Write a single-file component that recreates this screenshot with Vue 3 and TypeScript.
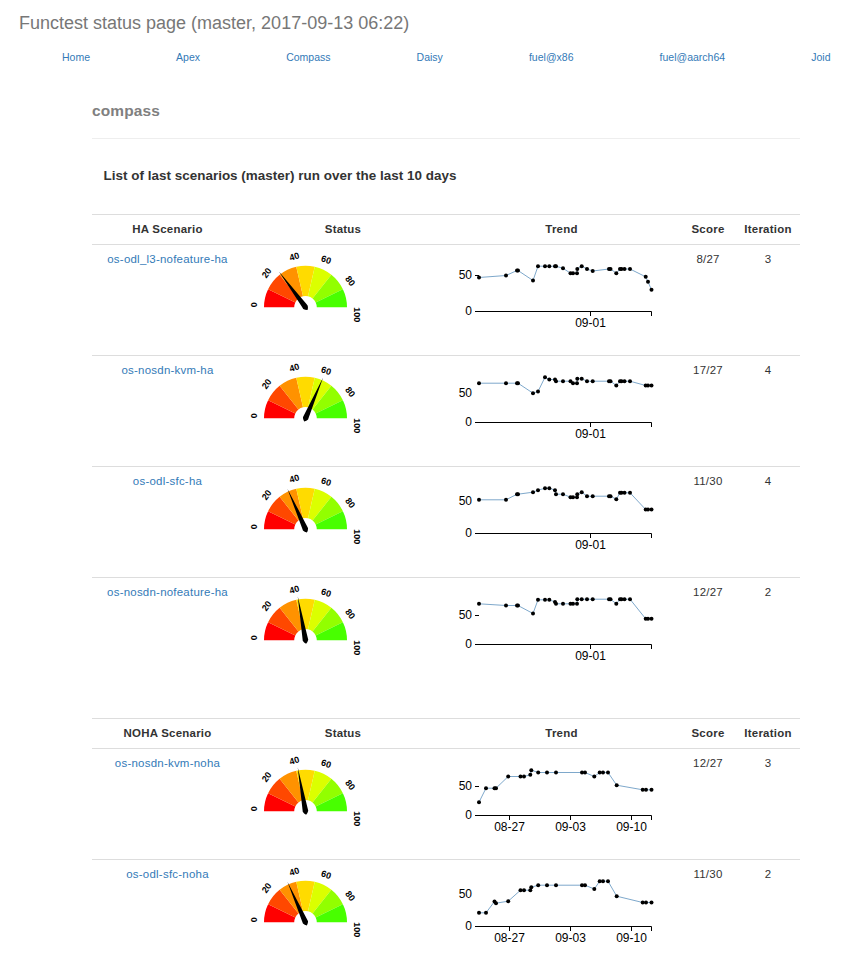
<script setup lang="ts">
interface Series {
  fifty: number
  tick: boolean
  dates: { x: number; label: string }[]
  points: [number, number][]
}
interface Scenario {
  name: string
  score: number
  max: number
  iteration: number
  trend: Series
}
interface Group {
  title: string
  rows: Scenario[]
}

const links = ['Home', 'Apex', 'Compass', 'Daisy', 'fuel@x86', 'fuel@aarch64', 'Joid']

const haDates = [{ x: 142.5, label: '09-01' }]
const nohaDates = [
  { x: 61.5, label: '08-27' },
  { x: 122.5, label: '09-03' },
  { x: 183.5, label: '09-10' },
]

const haX = [31, 58, 69, 70, 85, 90, 97, 101.3, 107, 108, 115, 122.5, 125, 129, 129.3, 133.7, 139, 144.7, 161, 162.5, 168.3, 172, 173.5, 176.5, 182, 197.7, 200, 203.5]
const nohaX = [31, 38, 46.5, 48, 60.2, 72.5, 76, 82.3, 83.3, 90.2, 99, 108, 134, 137, 146.3, 151.7, 155, 160, 168.7, 194.7, 198, 203.5]

// Heights are measured in pixels above the time axis.
function plot(xs: number[], heights: number[]): [number, number][] {
  return heights.map((h, i) => [xs[i], 61.5 - h])
}

const groups: Group[] = [
  {
    title: 'HA Scenario',
    rows: [
      { name: 'os-odl_l3-nofeature-ha', score: 8, max: 27, iteration: 3,
        trend: { fifty: 36, tick: true, dates: haDates, points: plot(haX, [34, 36, 41, 41, 31, 45.3, 45.3, 45.3, 45.3, 45.3, 43.2, 38.3, 38.3, 38.3, 42.5, 45.3, 42.5, 40.5, 42.5, 42.5, 38.3, 42.5, 42.5, 42.5, 42.5, 34.7, 29.7, 21.7]) } },
      { name: 'os-nosdn-kvm-ha', score: 17, max: 27, iteration: 4,
        trend: { fifty: 29, tick: false, dates: haDates, points: plot(haX, [39.3, 39.3, 39.3, 39.3, 29.3, 31, 45.3, 43, 43, 41.3, 41.3, 41.3, 39.3, 39.3, 43.7, 43.7, 41.3, 41.3, 41.3, 41.3, 37, 41.3, 41.3, 41.3, 41.3, 37, 37, 37]) } },
      { name: 'os-odl-sfc-ha', score: 11, max: 30, iteration: 4,
        trend: { fifty: 32, tick: false, dates: haDates, points: plot(haX, [33.7, 33.7, 39.3, 39.3, 41.3, 43.3, 45.3, 45.3, 43.3, 39.3, 39.3, 36.3, 36.3, 36.3, 39.3, 41.3, 37.3, 37.3, 37.3, 37.3, 34.3, 40.7, 40.7, 40.7, 40.7, 24, 24, 24]) } },
      { name: 'os-nosdn-nofeature-ha', score: 12, max: 27, iteration: 2,
        trend: { fifty: 29, tick: true, dates: haDates, points: plot(haX, [40.7, 39, 39, 39, 31, 44.7, 44.7, 44.7, 42.5, 40.7, 40.7, 40.7, 40.7, 40.7, 45.3, 45.3, 45.3, 45.3, 45.3, 45.3, 40.7, 45.3, 45.3, 45.3, 45.3, 25.7, 25.7, 25.7]) } },
    ],
  },
  {
    title: 'NOHA Scenario',
    rows: [
      { name: 'os-nosdn-kvm-noha', score: 12, max: 27, iteration: 3,
        trend: { fifty: 29, tick: true, dates: nohaDates, points: plot(nohaX, [13.3, 27.3, 27.3, 27.3, 39, 39, 39, 40.7, 45.3, 43, 43, 43, 43, 43, 39, 43, 43, 43, 30.3, 25.7, 25.7, 25.7]) } },
      { name: 'os-odl-sfc-noha', score: 11, max: 30, iteration: 2,
        trend: { fifty: 32, tick: false, dates: nohaDates, points: plot(nohaX, [13.7, 13.7, 25, 23.3, 25.3, 36.3, 36.3, 36.3, 39.3, 41.3, 41.3, 41.3, 41.3, 41.3, 37.5, 45.3, 45.3, 45.3, 30.3, 24, 24, 24]) } },
    ],
  },
]

const colors = ['#ff0000', '#ff4800', '#ff9200', '#ffdb00', '#dbff00', '#92ff00', '#48ff00']
const labels = [0, 20, 40, 60, 80, 100]

function arc(i: number): string {
  const outer = 41.5
  const inner = 11.3
  const a = Math.PI * (1 - i / 7)
  const b = Math.PI * (1 - (i + 1) / 7)
  const p = (r: number, t: number) => `${(r * Math.cos(t)).toFixed(3)} ${(-r * Math.sin(t)).toFixed(3)}`
  return `M${p(outer, a)}A${outer} ${outer} 0 0 1 ${p(outer, b)}L${p(inner, b)}A${inner} ${inner} 0 0 0 ${p(inner, a)}Z`
}

function polyline(points: [number, number][]): string {
  return points.map((p) => p.join(',')).join(' ')
}
</script>

<template>
  <div class="page">
    <h3 class="title">Functest status page (master, 2017-09-13 06:22)</h3>
    <nav class="nav">
      <a v-for="l in links" :key="l">{{ l }}</a>
    </nav>
    <main class="content">
      <h2 class="installer">compass</h2>
      <h3 class="caption">List of last scenarios (master) run over the last 10 days</h3>
      <section v-for="g in groups" :key="g.title" class="group">
        <div class="row head">
          <div>{{ g.title }}</div>
          <div>Status</div>
          <div>Trend</div>
          <div>Score</div>
          <div>Iteration</div>
        </div>
        <div v-for="r in g.rows" :key="r.name" class="row body">
          <div><a>{{ r.name }}</a></div>
          <div class="chart-cell">
            <svg class="gauge" width="120" height="90" viewBox="0 0 120 90">
              <g transform="translate(57.5 57.3)">
                <path v-for="(c, i) in colors" :key="c" :d="arc(i)" :fill="c" />
                <text v-for="n in labels" :key="n" class="mark" :transform="`rotate(${-90 + n * 1.8}) translate(0 -48.6)`">{{ n }}</text>
                <path class="needle" d="M2.8 0Q2.4 -6 0 -44.5Q-2.4 -6 -2.8 0Q-2 2 0 3.4Q2 2 2.8 0Z" :transform="`rotate(${-90 + (r.score / r.max) * 180})`" />
              </g>
            </svg>
          </div>
          <div class="chart-cell">
            <svg class="trend" width="225" height="90" viewBox="0 0 225 90">
              <path class="axis" d="M27 61.5H203.5V66" />
              <path v-if="r.trend.tick" class="axis" :d="`M27 ${61.5 - r.trend.fifty}h4`" />
              <text class="value" x="24" y="65.3">0</text>
              <text class="value" x="24" :y="65.3 - r.trend.fifty">50</text>
              <g v-for="d in r.trend.dates" :key="d.label">
                <path class="axis" :d="`M${d.x} 61.5v4.5`" />
                <text class="date" :x="d.x" y="77">{{ d.label }}</text>
              </g>
              <polyline class="line" :points="polyline(r.trend.points)" />
              <circle v-for="(p, i) in r.trend.points" :key="i" :cx="p[0]" :cy="p[1]" r="2" />
            </svg>
          </div>
          <div>{{ r.score }}/{{ r.max }}</div>
          <div>{{ r.iteration }}</div>
        </div>
      </section>
    </main>
  </div>
</template>

<style>
body {
  margin: 0;
  background: #fff;
}
</style>

<style scoped>
.page {
  height: 956px;
  overflow: hidden;
  box-sizing: border-box;
  padding-top: 13px;
  font-family: "Liberation Sans", Arial, sans-serif;
  font-size: 11.48px;
  color: #333;
}
.title {
  margin: 0 0 0 19px;
  font-size: 18px;
  line-height: 20px;
  font-weight: 400;
  color: #777;
  white-space: nowrap;
}
.nav {
  display: flex;
  justify-content: space-between;
  margin-top: 17px;
  padding: 0 19.5px 0 62px;
  font-size: 10.5px;
  line-height: 15px;
}
a {
  color: #337ab7;
  text-decoration: none;
}
.content {
  width: 708px;
  margin-left: 92px;
}
.installer {
  margin: 36px 0 0;
  padding-bottom: 17px;
  border-bottom: 1px solid #eee;
  font-size: 15.45px;
  letter-spacing: 0.16px;
  line-height: 20px;
  color: #808080;
}
.caption {
  margin: 27px 0 29px;
  padding-left: 11.5px;
  font-size: 13.45px;
  letter-spacing: 0.02px;
  line-height: 19px;
}
.group {
  margin-bottom: 30px;
}
.row {
  display: grid;
  grid-template-columns: 151px 200px 237px 56px 64px;
  box-sizing: border-box;
  border-top: 1px solid #ddd;
  text-align: center;
  line-height: 17px;
  letter-spacing: 0.23px;
}
.row > div {
  padding-top: 6px;
}
.head {
  height: 30px;
  font-weight: 700;
}
.body {
  height: 111px;
}
.row > .chart-cell {
  padding: 5px 0 0 5px;
  text-align: left;
  letter-spacing: 0;
}
svg {
  display: block;
}
.mark {
  font-size: 9px;
  font-weight: 700;
  fill: #000;
}
.axis {
  fill: none;
  stroke: #000;
  stroke-width: 1;
}
.value {
  font-size: 12px;
  text-anchor: end;
  fill: #000;
}
.date {
  font-size: 12px;
  text-anchor: middle;
  fill: #000;
}
.line {
  fill: none;
  stroke: #4682b4;
  stroke-width: 0.7;
}
</style>
